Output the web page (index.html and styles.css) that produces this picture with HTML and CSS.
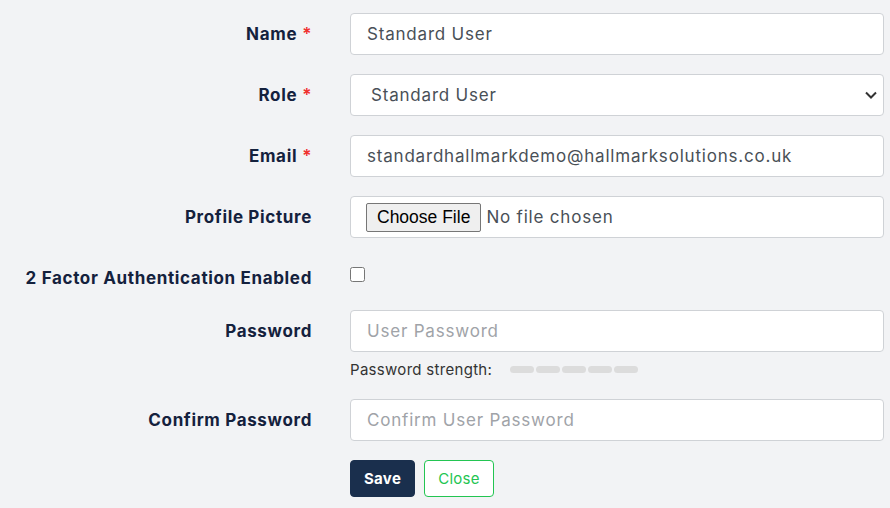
FILE: index.html
```html
<!DOCTYPE html>
<html lang="en">
<head>
<meta charset="utf-8">
<title>Edit User</title>
<link rel="stylesheet" href="styles.css">
</head>
<body>
<form class="user-form">
  <div class="row">
    <label class="lbl" for="name">Name <em>*</em></label>
    <div class="field"><input type="text" id="name" class="ctrl" value="Standard User"></div>
  </div>
  <div class="row">
    <label class="lbl" for="role">Role <em>*</em></label>
    <div class="field">
      <select id="role" class="ctrl">
        <option>Standard User</option>
        <option>Administrator</option>
      </select>
    </div>
  </div>
  <div class="row">
    <label class="lbl" for="email">Email <em>*</em></label>
    <div class="field"><input type="email" id="email" class="ctrl" value="standardhallmarkdemo@hallmarksolutions.co.uk"></div>
  </div>
  <div class="row">
    <label class="lbl" for="pic">Profile Picture</label>
    <div class="field"><input type="file" id="pic" class="ctrl file"></div>
  </div>
  <div class="row row-chk">
    <label class="lbl" for="twofa">2 Factor Authentication Enabled</label>
    <div class="field"><input type="checkbox" id="twofa"></div>
  </div>
  <div class="row row-pw">
    <label class="lbl" for="pw">Password</label>
    <div class="field">
      <input type="password" id="pw" class="ctrl" placeholder="User Password">
      <div class="strength">
        <span>Password strength:</span>
        <ul class="bars"><li></li><li></li><li></li><li></li><li></li></ul>
      </div>
    </div>
  </div>
  <div class="row">
    <label class="lbl" for="pw2">Confirm Password</label>
    <div class="field"><input type="password" id="pw2" class="ctrl" placeholder="Confirm User Password"></div>
  </div>
  <div class="row row-btn">
    <span></span>
    <div class="field btn-area">
      <button type="submit" class="btn btn-save">Save</button>
      <button type="button" class="btn btn-close">Close</button>
    </div>
  </div>
</form>
</body>
</html>
```

FILE: styles.css
```css
*{margin:0;padding:0;box-sizing:border-box}
body{background:#f2f3f5;font-family:Inter,"Open Sans",sans-serif;font-size:17px;letter-spacing:.8px;color:#495057}
.user-form{width:884px;padding-top:13px}
.row{display:grid;grid-template-columns:312px 534px;column-gap:38px;align-items:start;margin-bottom:19px}
.lbl{display:flex;align-items:center;justify-content:flex-end;height:42px;font-weight:700;font-size:17px;letter-spacing:.65px;color:#14213d;white-space:nowrap}
.lbl em{font-style:normal;color:#f0302d;margin-left:5px;font-weight:600}
.ctrl{display:block;width:100%;height:42px;padding:0 16px;border:1px solid #cfd2d6;border-radius:4px;background:#fff;font:inherit;letter-spacing:inherit;color:#495057}
.ctrl::placeholder{color:#a0a3a8}
select.ctrl{-webkit-appearance:none;appearance:none;background:#fff url("data:image/svg+xml,%3Csvg xmlns='http://www.w3.org/2000/svg' width='12' height='8' viewBox='0 0 12 8'%3E%3Cpath d='M1 1.5l5 5 5-5' fill='none' stroke='%23333' stroke-width='2'/%3E%3C/svg%3E") no-repeat right 6px center;text-indent:4px}
.file{padding:6px 15px}
.file::file-selector-button{font-family:"Liberation Sans",Arial,sans-serif;font-size:17.5px;letter-spacing:0;height:29px;padding:0 10px;margin-right:5px;border:1px solid #767676;border-radius:2px;background:#efefef;color:#000}
.row-chk{margin-bottom:11px}
.row-chk .field{height:42px;display:flex;align-items:center}
.row-chk input{width:15px;height:15px;margin:0 0 7px}
.row-pw{margin-bottom:20px}
.strength{display:flex;align-items:center;margin-top:8px;font-size:15px;letter-spacing:.3px;color:#333}
.bars{display:flex;gap:2px;list-style:none;margin-left:18px}
.bars li{width:24px;height:7px;border-radius:4px;background:#dcdcdc}
.btn-area{display:flex;gap:9px}
.btn{height:37px;padding:0 13px;border-radius:4px;font:inherit;font-size:15px;letter-spacing:.3px;cursor:pointer}
.btn-save{background:#1a2f4d;border:1px solid #1a2f4d;color:#fff;font-weight:700}
.btn-close{background:#fff;border:1px solid #23c552;color:#23c552}
```
